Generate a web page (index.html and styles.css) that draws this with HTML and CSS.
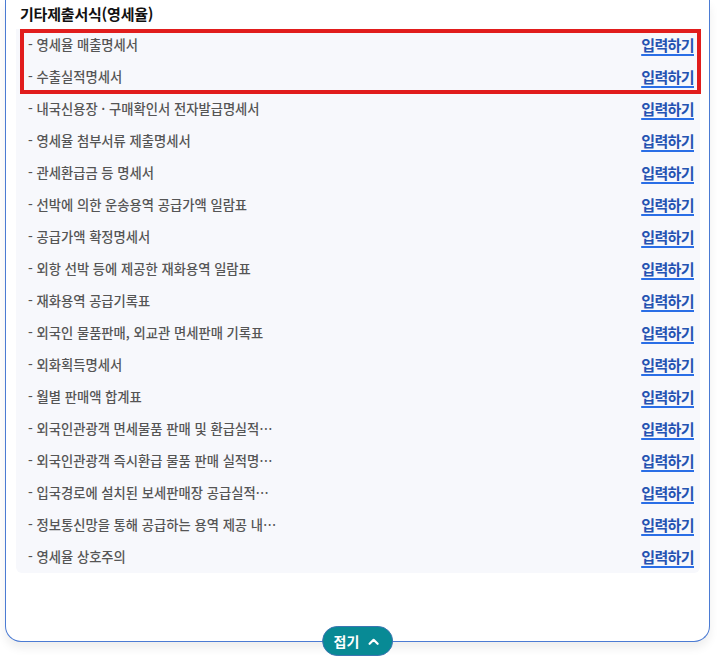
FILE: index.html
```html
<!DOCTYPE html>
<html lang="ko">
<head>
<meta charset="utf-8">
<link rel="stylesheet" href="styles.css">
</head>
<body>
<div class="card">
  <h3 class="title">기타제출서식(영세율)</h3>
  <div class="list">
    <div class="group">
      <div class="row"><span class="name">- 영세율 매출명세서</span><a class="link" href="#">입력하기</a></div>
      <div class="row"><span class="name">- 수출실적명세서</span><a class="link" href="#">입력하기</a></div>
    </div>
    <div class="row"><span class="name">- 내국신용장 · 구매확인서 전자발급명세서</span><a class="link" href="#">입력하기</a></div>
    <div class="row"><span class="name">- 영세율 첨부서류 제출명세서</span><a class="link" href="#">입력하기</a></div>
    <div class="row"><span class="name">- 관세환급금 등 명세서</span><a class="link" href="#">입력하기</a></div>
    <div class="row"><span class="name">- 선박에 의한 운송용역 공급가액 일람표</span><a class="link" href="#">입력하기</a></div>
    <div class="row"><span class="name">- 공급가액 확정명세서</span><a class="link" href="#">입력하기</a></div>
    <div class="row"><span class="name">- 외항 선박 등에 제공한 재화용역 일람표</span><a class="link" href="#">입력하기</a></div>
    <div class="row"><span class="name">- 재화용역 공급기록표</span><a class="link" href="#">입력하기</a></div>
    <div class="row"><span class="name">- 외국인 물품판매, 외교관 면세판매 기록표</span><a class="link" href="#">입력하기</a></div>
    <div class="row"><span class="name">- 외화획득명세서</span><a class="link" href="#">입력하기</a></div>
    <div class="row"><span class="name">- 월별 판매액 합계표</span><a class="link" href="#">입력하기</a></div>
    <div class="row"><span class="name">- 외국인관광객 면세물품 판매 및 환급실적…</span><a class="link" href="#">입력하기</a></div>
    <div class="row"><span class="name">- 외국인관광객 즉시환급 물품 판매 실적명…</span><a class="link" href="#">입력하기</a></div>
    <div class="row"><span class="name">- 입국경로에 설치된 보세판매장 공급실적…</span><a class="link" href="#">입력하기</a></div>
    <div class="row"><span class="name">- 정보통신망을 통해 공급하는 용역 제공 내…</span><a class="link" href="#">입력하기</a></div>
    <div class="row"><span class="name">- 영세율 상호주의</span><a class="link" href="#">입력하기</a></div>
  </div>
  <button class="fold" type="button">접기
    <svg class="chev" width="11" height="7" viewBox="0 0 11 7"><path d="M1.5 5.8 L5.5 1.8 L9.5 5.8" fill="none" stroke="#fff" stroke-width="2.2" stroke-linecap="round" stroke-linejoin="round"/></svg>
  </button>
</div>
</body>
</html>
```

FILE: styles.css
```css
html, body {
  margin: 0;
  padding: 0;
  background: #ffffff;
}
body {
  font-family: "Noto Sans CJK KR", "Noto Sans", sans-serif;
  width: 720px;
  height: 666px;
  overflow: hidden;
}
.card {
  position: relative;
  box-sizing: border-box;
  width: 705px;
  margin-left: 5px;
  border: 1px solid #4b7bd3;
  border-top: none;
  border-radius: 0 0 16px 16px;
  padding: 0 9px 68px 10px;
  box-shadow: 0 6px 10px rgba(0, 0, 0, 0.07);
  background: #fff;
}
.title {
  margin: 0;
  height: 29px;
  line-height: 27px;
  padding-left: 4px;
  font-size: 15px;
  font-weight: 700;
  color: #111;
  letter-spacing: -0.2px;
}
.list {
  background: #f7f8fc;
  border-radius: 0 0 6px 6px;
}
.group {
  position: relative;
}
.group::after {
  content: "";
  position: absolute;
  top: 0;
  bottom: -1px;
  left: 4px;
  right: -1px;
  border: 4px solid #e11d1d;
  pointer-events: none;
}
.row {
  display: flex;
  align-items: center;
  justify-content: space-between;
  height: 32px;
  padding: 0 6px 0 12px;
}
.name {
  font-size: 13.3px;
  color: #555;
  letter-spacing: 0;
  font-weight: 500;
  position: relative;
  top: -1px;
}
.link {
  font-size: 15px;
  font-weight: 700;
  color: #2553b2;
  text-decoration: underline;
  text-decoration-color: #2a6ee6;
  text-decoration-thickness: 2px;
  text-underline-offset: 3px;
  letter-spacing: -0.6px;
  position: relative;
  top: -1px;
}
.fold {
  position: absolute;
  left: 50%;
  bottom: -15px;
  transform: translateX(-50%);
  display: flex;
  align-items: center;
  gap: 9px;
  height: 30px;
  padding: 0 13px 0 11px;
  border: 1px solid #3c75b2;
  border-radius: 15px;
  background: #088a95;
  color: #fff;
  font-family: "Noto Sans CJK KR", "Noto Sans", sans-serif;
  font-size: 14px;
  font-weight: 700;
}
.chev {
  display: block;
}
```
